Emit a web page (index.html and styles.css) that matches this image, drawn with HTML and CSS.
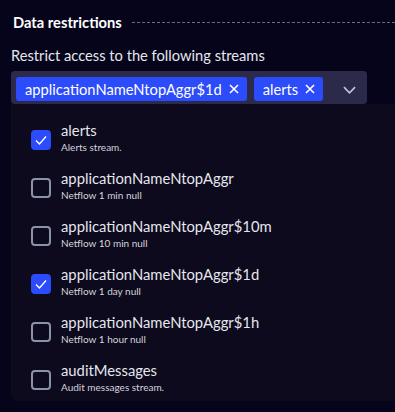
FILE: index.html
```html
<!DOCTYPE html>
<html>
	<head>
		<title>Data restrictions</title>
		<link rel="stylesheet" href="styles.css">
	</head>
	<body>
		<div class="section">
			<div class="heading">
				<span class="title">Data restrictions</span>
				<span class="rule"></span>
			</div>
			<div class="label">Restrict access to the following streams</div>
			<div class="select">
				<span class="chip">applicationNameNtopAggr$1d
					<svg class="x" viewBox="0 0 10 10"><path d="M1 1L9 9M9 1L1 9"/></svg>
				</span>
				<span class="chip">alerts
					<svg class="x" viewBox="0 0 10 10"><path d="M1 1L9 9M9 1L1 9"/></svg>
				</span>
				<svg class="chevron" viewBox="0 0 14 8"><path d="M1 1L7 7L13 1"/></svg>
			</div>
			<div class="menu">
				<div class="item">
					<span class="box on"><svg viewBox="0 0 20 20"><path d="M5 10.5L8.5 14L15 6.5"/></svg></span>
					<div class="text"><div class="name">alerts</div><div class="desc">Alerts stream.</div></div>
				</div>
				<div class="item">
					<span class="box"></span>
					<div class="text"><div class="name">applicationNameNtopAggr</div><div class="desc">Netflow 1 min null</div></div>
				</div>
				<div class="item">
					<span class="box"></span>
					<div class="text"><div class="name">applicationNameNtopAggr$10m</div><div class="desc">Netflow 10 min null</div></div>
				</div>
				<div class="item">
					<span class="box on"><svg viewBox="0 0 20 20"><path d="M5 10.5L8.5 14L15 6.5"/></svg></span>
					<div class="text"><div class="name">applicationNameNtopAggr$1d</div><div class="desc">Netflow 1 day null</div></div>
				</div>
				<div class="item">
					<span class="box"></span>
					<div class="text"><div class="name">applicationNameNtopAggr$1h</div><div class="desc">Netflow 1 hour null</div></div>
				</div>
				<div class="item">
					<span class="box"></span>
					<div class="text"><div class="name">auditMessages</div><div class="desc">Audit messages stream.</div></div>
				</div>
			</div>
		</div>
	</body>
</html>
```

FILE: styles.css
```css
body {
	margin: 0;
	background: #05041a;
	font-family: Lato, "Noto Sans", sans-serif;
	color: #e6e6ee;
	overflow: hidden;
}
.section {
	padding: 12px 0 0 11px;
}
.heading {
	display: flex;
	align-items: center;
	gap: 10px;
	padding-left: 2px;
	height: 20px;
}
.title {
	font-weight: bold;
	font-size: 14.7px;
	color: #fff;
}
.rule {
	flex: 1;
	border-top: 1px dashed #6c6a88;
}
.label {
	margin-top: 13px;
	font-size: 14.7px;
	line-height: 20px;
}
.select {
	margin-top: 6px;
	width: 356px;
	height: 33px;
	box-sizing: border-box;
	background: #2c2a4a;
	border-radius: 4px;
	padding: 6px 5px 0;
	display: flex;
	align-items: flex-start;
	gap: 7px;
}
.chip {
	display: inline-flex;
	align-items: center;
	gap: 7px;
	height: 24px;
	padding: 0 8px 0 9px;
	background: #2c4bfa;
	border-radius: 3px;
	color: #fff;
	font-size: 14.7px;
}
.x {
	width: 10px;
	height: 10px;
	stroke: #fff;
	stroke-width: 1.6;
	fill: none;
}
.chevron {
	width: 13px;
	height: 8px;
	margin: 9px 6px 0 auto;
	stroke: #c4c4d4;
	stroke-width: 1.8;
	fill: none;
}
.menu {
	background: #0c0a1c;
	border-radius: 0 0 0 8px;
	padding: 12px 0 0 20px;
	height: 297px;
	box-sizing: border-box;
	overflow: hidden;
}
.item {
	display: flex;
	align-items: center;
	gap: 10px;
	height: 48px;
}
.box {
	width: 20px;
	height: 20px;
	box-sizing: border-box;
	border: 2px solid #8c91aa;
	border-radius: 4px;
	flex: none;
}
.box.on {
	border: none;
	background: #2c4bfa;
}
.box svg {
	width: 20px;
	height: 20px;
	stroke: #fff;
	stroke-width: 1.4;
	fill: none;
	display: block;
}
.text {
	margin-top: -6px;
}
.name {
	font-size: 14.8px;
	line-height: 20px;
}
.desc {
	font-size: 10px;
	line-height: 15px;
	color: #d4d4de;
}
```
